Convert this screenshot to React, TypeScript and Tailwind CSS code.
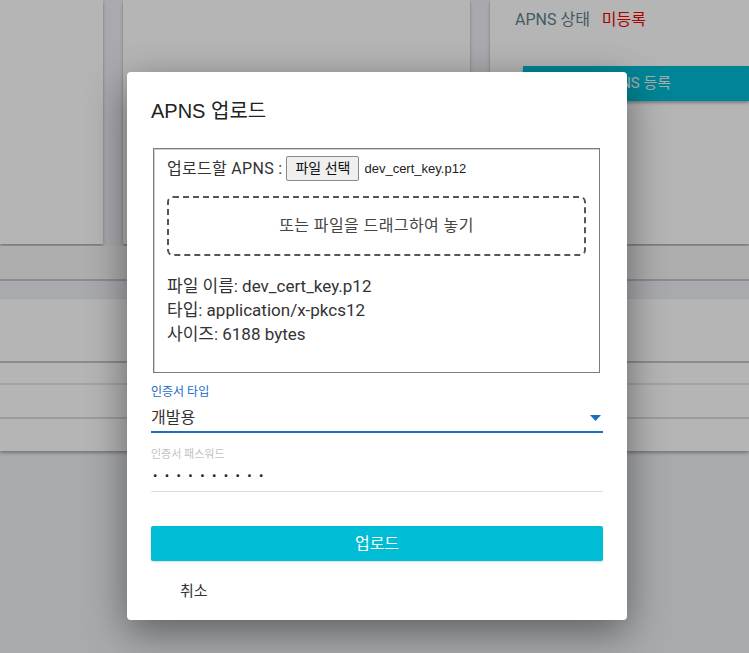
export default function App() {
  const font = "font-['Roboto','Noto_Sans_CJK_KR',sans-serif]";
  return (
    <div className={`relative h-[653px] w-[749px] overflow-hidden bg-[#eef0f5] ${font}`}>
      {/* Page behind the dialog */}
      <div className="flex flex-col">
        <div className="flex h-[244px] gap-5">
          <div className="w-[103px] bg-white shadow-[0_2px_3px_rgba(0,0,0,0.3)]" />
          <div className="w-[347px] bg-white shadow-[0_2px_3px_rgba(0,0,0,0.3)]" />
          <div className="flex-1 bg-white pl-[25px] pt-[8px] shadow-[0_2px_3px_rgba(0,0,0,0.3)]">
            <div className="flex items-center gap-3 text-[16px] text-[#5f7f8e]">
              <span>APNS 상태</span>
              <span className="text-[#ee0000]">미등록</span>
            </div>
            <div className="ml-[8px] mt-[34px] flex h-[35px] items-center justify-center bg-[#00bcd4] text-[15px] text-[#eaf6f8] shadow-[0_2px_3px_rgba(0,0,0,0.3)]">
              APNS 등록
            </div>
          </div>
        </div>
        <div className="mt-[2px] h-[35px] border-b-2 border-[#c5c6c9] bg-[#f5f5f7]" />
        <div className="mt-[18px] flex h-[152px] flex-col bg-white shadow-[0_2px_3px_rgba(0,0,0,0.3)]">
          <div className="h-[64px] border-b-2 border-[#c6c6c6]" />
          <div className="h-[22px] border-b-2 border-[#e6e6e6]" />
          <div className="h-[34px] border-b-2 border-[#dcdcdc]" />
        </div>
      </div>

      {/* Scrim */}
      <div className="absolute inset-0 bg-black/[0.29]" />

      {/* Dialog */}
      <div className="absolute left-[127px] top-[72px] flex h-[548px] w-[500px] flex-col rounded-sm bg-white px-[24px] shadow-[0_12px_40px_rgba(0,0,0,0.45)]">
        <h2 className="mt-[25px] font-['Liberation_Sans','Noto_Sans_CJK_KR',sans-serif] text-[20px] leading-[28px] text-[#222]">
          APNS 업로드
        </h2>

        <div className="ml-[2px] mr-[3px] mt-[23px] flex h-[225px] flex-col border border-[#7c7c7c] px-[13px] pt-[7px] shadow-[inset_1px_1px_0_#d0d0d0]">
          <div className="flex items-center text-[16px] tracking-[0.3px] text-[#333]">
            <span>업로드할 APNS :</span>
            <span className="ml-[4px] flex h-[25px] items-center rounded-[2px] border border-[#8a8a8a] bg-[#efefef] px-[8px] text-[14px] tracking-normal text-[#111]">
              파일 선택
            </span>
            <span className="ml-[5px] font-['Liberation_Sans',sans-serif] text-[13px] tracking-normal text-[#222]">
              dev_cert_key.p12
            </span>
          </div>

          <div className="mt-[15px] flex h-[60px] items-center justify-center rounded-[6px] border-2 border-dashed border-[#555] text-[16px] tracking-[0.4px] text-[#444]">
            또는 파일을 드래그하여 놓기
          </div>

          <div className="mt-[18px] flex flex-col text-[17px] leading-[24px] text-[#333]">
            <span>파일 이름: dev_cert_key.p12</span>
            <span>타입: application/x-pkcs12</span>
            <span>사이즈: 6188 bytes</span>
          </div>
        </div>

        <label className="mt-[11px] text-[12px] leading-[16px] text-[#1a6cc4]">인증서 타입</label>
        <div className="mt-[6px] flex items-center justify-between border-b-2 border-[#1a6cc4] pb-[1px]">
          <span className="text-[16px] leading-[24px] text-[#333]">개발용</span>
          <svg width="11" height="6" viewBox="0 0 11 6" className="mr-[2px]">
            <path d="M0 0 L11 0 L5.5 6 Z" fill="#1a6cc4" />
          </svg>
        </div>

        <label className="mt-[15px] text-[11px] leading-[14px] text-[#c2c2c2]">인증서 패스워드</label>
        <div className="flex items-center border-b border-[#dedede] pb-[5px] pt-[4px]">
          <span className="ml-[2px] text-[13px] leading-[20px] tracking-[7.4px] text-[#222]">
            ••••••••••
          </span>
        </div>

        <button className="mt-[34px] flex h-[35px] items-center justify-center rounded-[2px] bg-[#00bcd4] text-[16px] text-white shadow-[0_1px_2px_rgba(0,0,0,0.15)]">
          업로드
        </button>

        <span className="ml-[29px] mt-[19px] text-[15px] text-[#333]">취소</span>
      </div>
    </div>
  );
}
